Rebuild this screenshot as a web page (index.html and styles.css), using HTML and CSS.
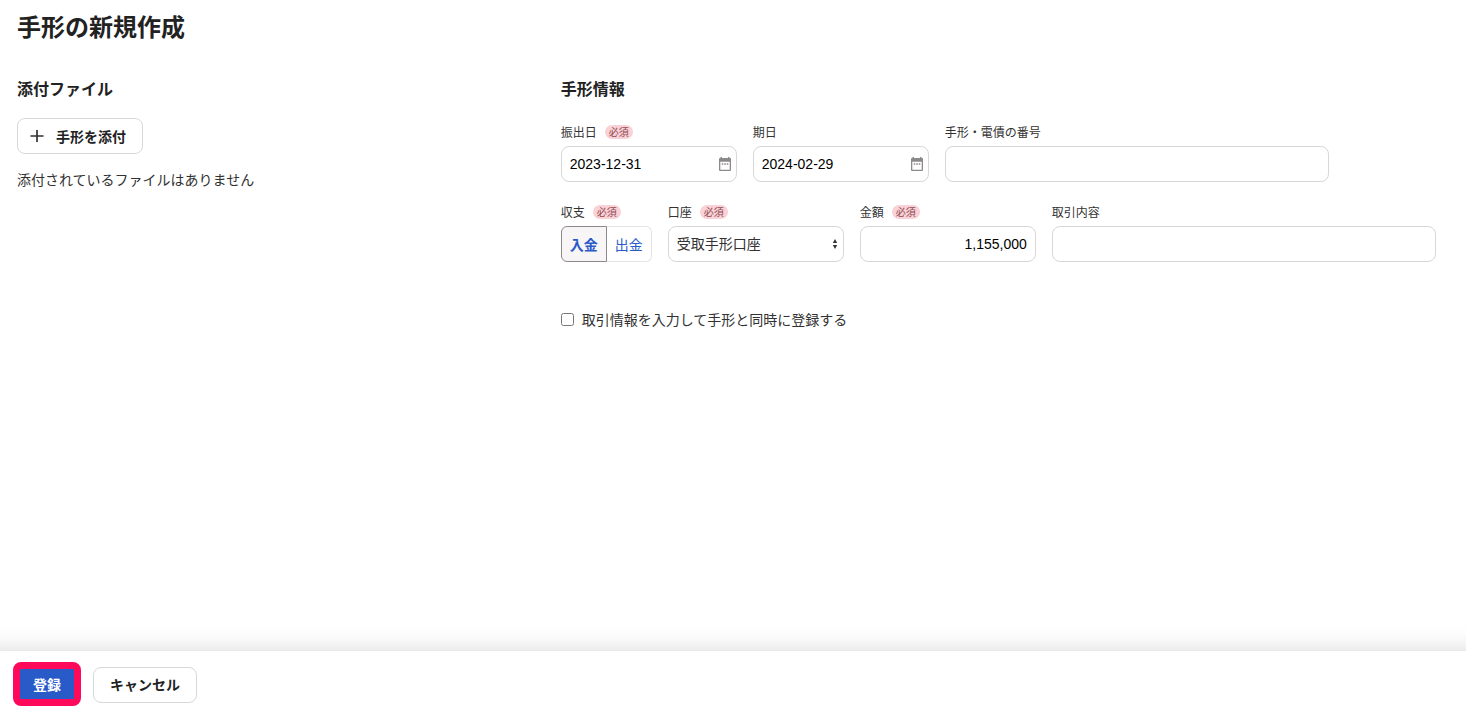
FILE: index.html
```html
<!DOCTYPE html>
<html lang="ja">
<head>
<meta charset="utf-8">
<meta name="viewport" content="width=device-width, initial-scale=1">
<title>手形の新規作成</title>
<link rel="stylesheet" href="styles.css">
</head>
<body>
<form class="page">
  <main class="content">
    <h1 class="page-title">手形の新規作成</h1>
    <div class="columns">
      <section class="attachments">
        <h2 class="section-title">添付ファイル</h2>
        <button type="button" class="button button-attach">
          <svg class="plus" viewBox="0 0 14 14" aria-hidden="true"><path d="M7 1v12M.5 7h13"/></svg>
          手形を添付
        </button>
        <p class="empty-note">添付されているファイルはありません</p>
      </section>
      <section class="details">
        <h2 class="section-title">手形情報</h2>
        <div class="row">
          <div class="field field-small">
            <label class="label" for="issue-date">振出日<span class="badge">必須</span></label>
            <div class="control">
              <input class="input" id="issue-date" type="text" value="2023-12-31">
              <svg class="calendar" viewBox="0 0 12 14" aria-hidden="true"><path d="M1.5 0H3v1h6V0h1.500v1h.5q1 0 1 1v11q0 1-1 1H1q-1 0-1-1V2q0-1 1-1h.5zM1.300 4.700v8h9.400v-8zM2.700 6.200h1.600v1.600H2.700zM5.200 6.200h1.600v1.600H5.200zM7.700 6.200h1.600v1.600H7.700z" fill-rule="evenodd"/></svg>
            </div>
          </div>
          <div class="field field-small">
            <label class="label" for="due-date">期日</label>
            <div class="control">
              <input class="input" id="due-date" type="text" value="2024-02-29">
              <svg class="calendar" viewBox="0 0 12 14" aria-hidden="true"><path d="M1.5 0H3v1h6V0h1.500v1h.5q1 0 1 1v11q0 1-1 1H1q-1 0-1-1V2q0-1 1-1h.5zM1.300 4.700v8h9.400v-8zM2.700 6.200h1.600v1.600H2.700zM5.200 6.200h1.600v1.600H5.200zM7.700 6.200h1.600v1.600H7.700z" fill-rule="evenodd"/></svg>
            </div>
          </div>
          <div class="field field-large">
            <label class="label" for="number">手形・電債の番号</label>
            <input class="input" id="number" type="text">
          </div>
        </div>
        <div class="row">
          <div class="field">
            <span class="label" id="direction-label">収支<span class="badge">必須</span></span>
            <div class="segments" role="group" aria-labelledby="direction-label">
              <button type="button" class="segment segment-on" aria-pressed="true">入金</button>
              <button type="button" class="segment" aria-pressed="false">出金</button>
            </div>
          </div>
          <div class="field field-small">
            <label class="label" for="account">口座<span class="badge">必須</span></label>
            <div class="control">
              <select class="input select" id="account"><option>受取手形口座</option></select>
              <svg class="arrows" viewBox="0 0 6 10" aria-hidden="true"><path d="M3 0l2.200 4H.8zM3 10L.8 6h4.400z"/></svg>
            </div>
          </div>
          <div class="field field-small">
            <label class="label" for="amount">金額<span class="badge">必須</span></label>
            <input class="input input-number" id="amount" type="text" value="1,155,000">
          </div>
          <div class="field field-large">
            <label class="label" for="description">取引内容</label>
            <input class="input" id="description" type="text">
          </div>
        </div>
        <label class="check"><input class="check-box" type="checkbox">取引情報を入力して手形と同時に登録する</label>
      </section>
    </div>
  </main>
  <footer class="actions">
    <button type="submit" class="button button-primary">登録</button>
    <button type="button" class="button">キャンセル</button>
  </footer>
</form>
</body>
</html>
```
FILE: styles.css
```css
* {
  box-sizing: border-box;
}

body {
  margin: 0;
  background: #fff;
  color: #323232;
  font: 14px/20px "Noto Sans CJK JP", sans-serif;
}

.page {
  display: flex;
  flex-direction: column;
  min-height: 100vh;
  overflow: clip;
}

.content {
  flex: 1;
  padding: 8px 18px 32px 17px;
}

.page-title {
  margin: 0;
  color: #222;
  font-size: 24px;
  line-height: 36px;
}

.columns {
  display: flex;
  margin-top: 32px;
}

.attachments {
  flex: 0 0 38%;
}

.details {
  flex: 1;
  min-width: 0;
}

.section-title {
  margin: 0 0 18px;
  color: #222;
  font-size: 16px;
  line-height: 24px;
}

.button {
  display: inline-flex;
  align-items: center;
  justify-content: center;
  height: 36px;
  padding: 0 16px 2px;
  border: 1px solid #d7d7d7;
  border-radius: 8px;
  background: #fff;
  color: #222;
  font: bold 14px/20px "Noto Sans CJK JP", sans-serif;
}

.button-attach {
  gap: 12px;
  padding: 0 16px 0 12px;
}

.plus {
  width: 14px;
  height: 14px;
  fill: none;
  stroke: #323232;
  stroke-width: 1.7;
}

.empty-note {
  margin: 15px 0 0;
}

.row {
  display: flex;
  gap: 16px;
  margin-bottom: 16px;
}

.field-small {
  flex: 0 1 176px;
  min-width: 0;
}

.field-large {
  flex: 0 1 384px;
  min-width: 0;
}

.label {
  display: flex;
  align-items: center;
  gap: 8px;
  height: 16px;
  margin: 6px 0;
  font-size: 12px;
  line-height: 16px;
  white-space: nowrap;
}

.badge {
  padding: 0 4px;
  border-radius: 7px;
  background: #fad1d7;
  color: #8f4b50;
  font-size: 10px;
  line-height: 14px;
}

.control {
  position: relative;
}

.input {
  display: block;
  width: 100%;
  height: 36px;
  padding: 0 8px;
  border: 1px solid #d7d7d7;
  border-radius: 8px;
  background: #fff;
  color: #000;
  font: 14px/20px "Liberation Sans", "Noto Sans CJK JP", sans-serif;
}

.input-number {
  text-align: right;
}

.select {
  padding-bottom: 2px;
  appearance: none;
  color: #323232;
  font-family: "Noto Sans CJK JP", sans-serif;
}

.calendar {
  position: absolute;
  top: 11px;
  right: 6px;
  width: 12px;
  height: 14px;
  fill: #8c8989;
  pointer-events: none;
}

.arrows {
  position: absolute;
  top: 13px;
  right: 6px;
  width: 6px;
  height: 10px;
  fill: #323232;
  pointer-events: none;
}

.segments {
  display: flex;
}

.segment {
  height: 36px;
  padding: 0 8px;
  border: 1px solid #e4e4e4;
  border-left: 0;
  border-radius: 0 6px 6px 0;
  background: #fff;
  color: #285ac8;
  font: 14px/20px "Noto Sans CJK JP", sans-serif;
}

.segment-on {
  border: 1px solid #8c8989;
  border-radius: 6px 0 0 6px;
  background: #f7f5f5;
  font-weight: bold;
}

.check {
  display: inline-flex;
  align-items: center;
  gap: 8px;
  margin-top: 31px;
}

.check-box {
  width: 13px;
  height: 13px;
  margin: 0;
}

.actions {
  position: sticky;
  bottom: 0;
  display: flex;
  gap: 16px;
  padding: 16px 17px 8px;
  background: #fff;
  box-shadow: 0 24px 24px 24px rgba(0, 0, 0, 0.16);
}

.button-primary {
  position: relative;
  padding: 0 15px 2px;
  border-color: #285ac8;
  background: #285ac8;
  color: #fff;
}

.button-primary::after {
  position: absolute;
  inset: -6px -5px -4px;
  border: 7px solid #ff0a5a;
  border-radius: 8px;
  content: "";
}
```
